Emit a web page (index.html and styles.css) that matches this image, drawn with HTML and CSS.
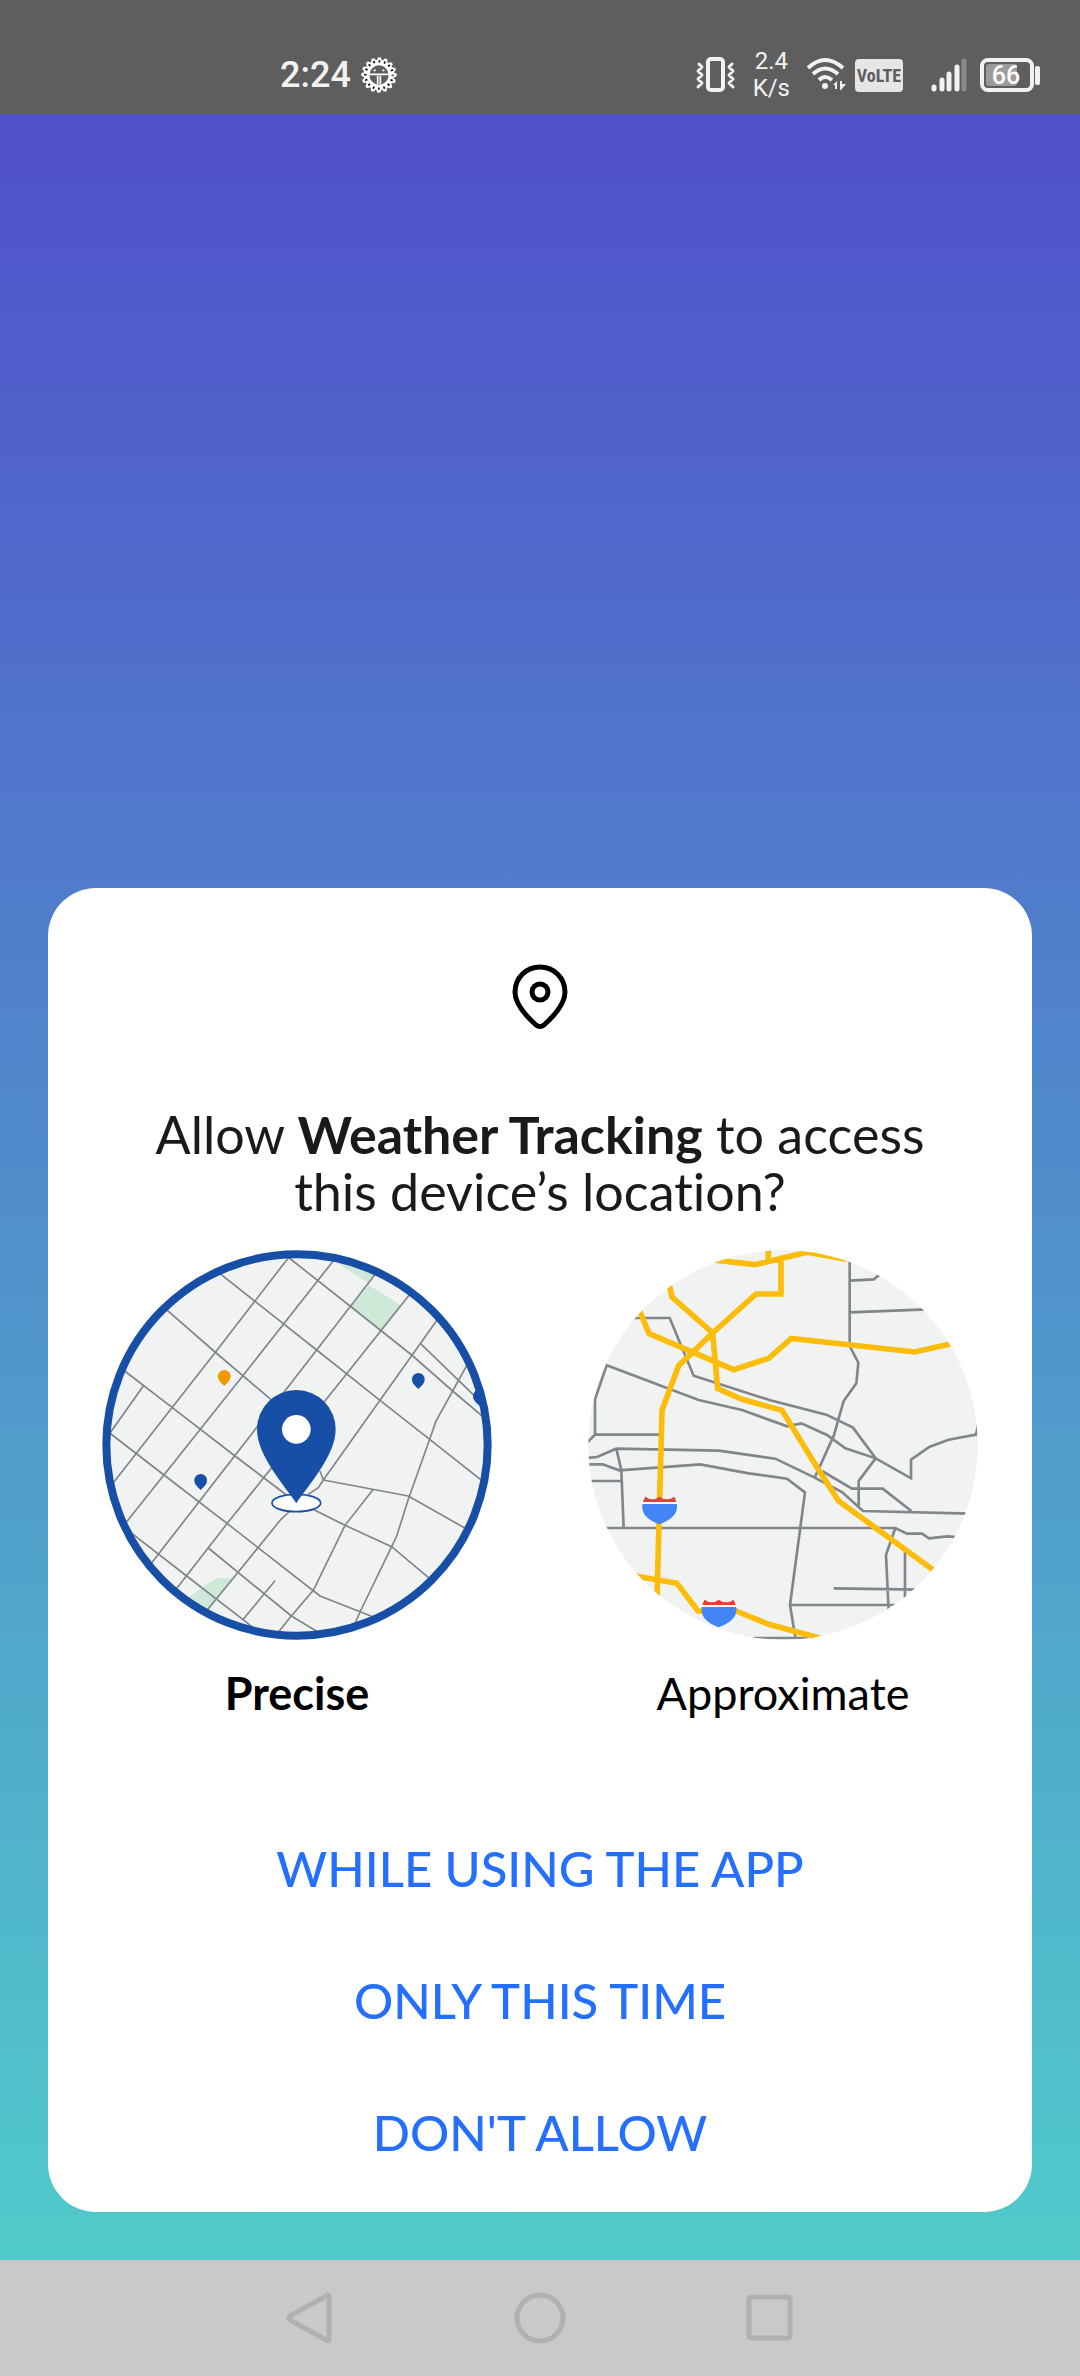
FILE: index.html
```html
<!DOCTYPE html>
<html lang="en">
<head>
<meta charset="utf-8">
<meta name="viewport" content="width=device-width, initial-scale=1">
<title>Location permission</title>
<link rel="stylesheet" href="styles.css">
</head>
<body>
<header class="status">
  <div class="status-group">
    <span class="clock">2:24</span>
    <svg class="gear" viewBox="0 0 108 108" aria-hidden="true">
      <circle cx="54" cy="54" r="46" fill="#fff"/>
      <circle cx="54" cy="54" r="33" fill="#5e5e5e"/>
      <g fill="none">
        <circle cx="54" cy="54" r="47" stroke="#fff" stroke-width="13" stroke-linecap="round" stroke-dasharray="0 18.457"/>
        <circle cx="54" cy="54" r="41" stroke="#000" stroke-width="7" stroke-dasharray="5 11.101" stroke-dashoffset="2.5"/>
        <circle cx="54" cy="54" r="32" stroke="#fff" stroke-width="6"/>
        <path d="M24 52H84M50 56V82M58 56V82" stroke="#fff" stroke-width="5"/>
        <path d="M38 40h6M64 40h6" stroke="#fff" stroke-width="5"/>
      </g>
    </svg>
  </div>
  <div class="status-group">
    <svg class="vibrate" viewBox="0 0 42 36" aria-hidden="true">
      <g fill="none" stroke="#f2f2f2" stroke-width="3" stroke-linejoin="round" stroke-linecap="round">
        <rect x="13" y="2" width="15" height="31" rx="3" stroke-width="4"/>
        <path d="M4 7l3 3-4 4 4 4-4 4 4 4-4 4M37 7l-3 3 4 4-4 4 4 4-4 4 4 4"/>
      </g>
    </svg>
    <span class="speed">2.4<br>K/s</span>
    <svg class="wifi" viewBox="0 0 41 36" aria-hidden="true">
      <g fill="none" stroke="#f2f2f2" stroke-width="4">
        <path d="M2 11Q19 -5 37 11M7 17Q19 6 32 17M13 23Q19 17 26 23"/>
      </g>
      <circle cx="19" cy="29" r="3" fill="#f2f2f2"/>
      <path d="M31 24v8h-2v-4h-2zM34 24h2v3h4l-5 6h-1z" fill="#f2f2f2"/>
    </svg>
    <span class="volte">VoLTE</span>
    <svg class="signal" viewBox="0 0 36 34" aria-hidden="true">
      <g stroke="#f2f2f2" stroke-width="5" stroke-linecap="round">
        <path d="M3 29v2M11 22v9M18 16v15M26 9v22"/>
        <path d="M33 3v28" stroke="#8a8a8a"/>
      </g>
    </svg>
    <svg class="battery" viewBox="0 0 60 34" role="img" aria-label="Battery 66">
      <rect x="2" y="2" width="50" height="30" rx="6" fill="none" stroke="#f2f2f2" stroke-width="4"/>
      <rect x="6" y="6" width="31" height="22" rx="3" fill="#9b9b9b"/>
      <rect x="55" y="8" width="5" height="19" rx="2" fill="#f2f2f2"/>
      <text class="battery-level" x="26" y="26" text-anchor="middle">66</text>
    </svg>
  </div>
</header>

<main class="screen">
  <form class="card">
    <svg class="pin" viewBox="0 0 56 66" aria-hidden="true">
      <g fill="none" stroke="#000" stroke-width="5">
        <path d="M28 3C14 3 3 14 3 28C3 40 14 52 24 61Q28 64 32 61C42 52 53 40 53 28C53 14 42 3 28 3Z"/>
        <circle cx="28" cy="28" r="8"/>
      </g>
    </svg>
    <h1 class="title">Allow <strong>Weather Tracking</strong> to access this device’s location?</h1>

    <div class="options">
      <label class="option">
        <input class="option-input" type="radio" name="accuracy" value="precise" checked>
        <svg class="map" viewBox="36 42 1170 1170" aria-hidden="true">
          <clipPath id="precise-clip"><circle cx="621" cy="627" r="570"/></clipPath>
          <g clip-path="url(#precise-clip)">
            <rect x="36" y="42" width="1170" height="1170" fill="#f0f3f2"/>
            <path d="M745 82L835 142L858 112L780 70ZM837 148L932 208L874 282L783 211ZM290 1090L335 1055L380 1027H430L354 1125L300 1150Z" fill="#cee9d8"/>
            <g fill="none" stroke="#80858a" stroke-width="5">
              <path d="M390 113L680 342L870 493L1019 610L1190 745M590 60L780 210L965 357L1088 465L1200 560M225 217L375 348L560 505M100 402L247 515L435 660L600 785L765 868L905 932L1030 1037M55 588L222 717L412 863L690 1080L860 1147M110 880L290 1020L490 1175M355 936L604 1140L690 1192M991 322L1180 505M700 732L955 780L1140 885"/>
              <path d="M597 63L375 350L50 766M732 72L458 420L80 895M858 112L680 342L170 1000M962 172L770 413L412 862L250 1070M1045 247L870 493L700 732L685 755L655 775M600 825L573 850L443 1010L345 1130M160 450L50 605M690 705L700 732M850 760L765 868L670 1063L604 1140L560 1195M1135 380L1088 465L1038 555L1019 610L955 790L920 900L905 932L810 1128L785 1185M555 1034L458 1152"/>
            </g>
            <ellipse cx="619" cy="801" rx="73" ry="26" fill="#fff" stroke="#174ea6" stroke-width="5"/>
            <path d="M619 802C585 750 501 660 501 580A118 118 0 0 1 737 580C737 660 653 750 619 802Z" fill="#174ea6"/>
            <circle cx="619" cy="580" r="43" fill="#fff"/>
            <path d="M403 450C390 438 384 432 384 421A19 19 0 0 1 422 421C422 432 415 438 403 450Z" fill="#f29900"/>
            <path d="M985 459C972 447 966 441 966 430A19 19 0 0 1 1004 430C1004 441 998 447 985 459ZM332 762C319 750 313 744 313 733A19 19 0 0 1 351 733C351 744 345 750 332 762ZM1170 510C1155 498 1149 490 1149 480A19 19 0 0 1 1190 480Z" fill="#174ea6"/>
          </g>
          <circle cx="621" cy="627" r="572" fill="none" stroke="#174ea6" stroke-width="24"/>
        </svg>
        <span class="option-name">Precise</span>
      </label>
      <label class="option">
        <input class="option-input" type="radio" name="accuracy" value="approximate">
        <svg class="map" viewBox="53 42 1170 1170" aria-hidden="true">
          <clipPath id="approx-clip"><circle cx="638" cy="627" r="584"/></clipPath>
          <g clip-path="url(#approx-clip)">
            <rect x="53" y="42" width="1170" height="1170" fill="#f0f3f2"/>
            <g fill="none" stroke="#80868b" stroke-width="8">
              <path d="M838 70V330L864 380L858 442L820 495L790 600L733 725M838 134L910 130L935 110M838 229L1070 220M180 246H298L370 419L600 493L768 536L848 575L916 667L1022 727V671L1078 632L1135 611L1217 596L1225 560M50 620L74 596V490L109 388L385 492L515 522L650 571L693 562L770 597L825 637L916 667L865 735V815M74 596H272M50 666L80 663L138 638L445 644L615 668L733 725L815 768L878 825L1200 833M50 685H97L147 703L390 685L535 712L650 728L704 769L659 1107L676 1210M138 638L153 703L160 876M60 735H153M100 876H975L1010 893H1055L1076 907L1130 901L1170 904M755 705L845 758H937L1023 825M975 876L947 957L955 1125M1004 945V1090M790 1057L1040 1061M659 1107H1000M550 1206L740 1206"/>
            </g>
            <g fill="none" stroke="#fbbc0b" stroke-width="17">
              <path d="M430 72L554 86L710 49L830 70M594 35V75M632 65V174H557L427 291L325 389L275 523L260 1090M295 140L305 183L427 291L442 458L515 490L635 523L745 702L805 795L1100 1010M208 225L236 293L490 401L595 367L663 307L1033 348L1150 322M195 1020L320 1042L383 1125H400M490 1122L595 1165L750 1207"/>
            </g>
            <g id="shield">
              <path d="M216 804H320C324 837 298 853 267 865C236 853 212 837 216 804Z" fill="#4285f4"/>
              <path d="M218 798Q220 790 225 782Q247 798 267 782Q290 798 312 782Q316 790 318 798Z" fill="#db4437"/>
              <path d="M216 801H320" stroke="#fff" stroke-width="6"/>
            </g>
            <use href="#shield" x="178" y="309"/>
          </g>
        </svg>
        <span class="option-name">Approximate</span>
      </label>
    </div>

    <div class="actions">
      <button class="action" type="button">WHILE USING THE APP</button>
      <button class="action" type="button">ONLY THIS TIME</button>
      <button class="action" type="button">DON'T ALLOW</button>
    </div>
  </form>
</main>

<nav class="navbar">
  <button class="nav-button" type="button" aria-label="Back">
    <svg class="nav-icon" viewBox="0 0 52 52"><path d="M44 3Q45 3 45 5V47Q45 50 42 48L6 28Q3 26 6 24L42 4Z"/></svg>
  </button>
  <button class="nav-button" type="button" aria-label="Home">
    <svg class="nav-icon" viewBox="0 0 52 52"><circle cx="26" cy="26" r="23"/></svg>
  </button>
  <button class="nav-button" type="button" aria-label="Recent apps">
    <svg class="nav-icon" viewBox="0 0 52 52"><rect x="5" y="5" width="41" height="41" rx="2"/></svg>
  </button>
</nav>
</body>
</html>
```
FILE: styles.css
```css
* {
  box-sizing: border-box;
}

body {
  display: flex;
  flex-direction: column;
  min-height: 100vh;
  margin: 0;
  color: #1a1a1a;
  font-family: Lato, "Open Sans", sans-serif;
  font-variant-ligatures: none;
}

button {
  padding: 0;
  border: 0;
  background: none;
  font: inherit;
  cursor: pointer;
}

svg {
  display: block;
}

/* Status bar */
.status {
  display: flex;
  align-items: center;
  justify-content: space-between;
  height: 114px;
  padding: 36px 40px 0 280px;
  background: #5e5e5e;
  color: #f2f2f2;
  font-family: Roboto, sans-serif;
}

.status-group {
  display: flex;
  align-items: center;
}

.clock {
  margin-right: 10px;
  font-size: 36px;
  font-weight: 500;
  line-height: 36px;
}

.gear {
  width: 36px;
  height: 36px;
}

.vibrate {
  width: 42px;
  height: 36px;
}

.speed {
  margin: 0 16px;
  font-size: 24px;
  line-height: 27px;
  text-align: center;
}

.wifi {
  width: 41px;
  height: 36px;
}

.volte {
  width: 48px;
  height: 33px;
  margin: 0 28px 0 8px;
  border-radius: 4px;
  background: #e6e6e6;
  color: #5e5e5e;
  font-family: "Roboto Condensed", "Liberation Sans Narrow", sans-serif;
  font-size: 18px;
  font-weight: 700;
  line-height: 33px;
  text-align: center;
}

.signal {
  width: 36px;
  height: 34px;
  margin-right: 13px;
}

.battery {
  width: 60px;
  height: 34px;
}

.battery-level {
  fill: #ffffff;
  font-size: 25px;
  font-weight: 500;
}

/* Permission card */
.screen {
  display: flex;
  flex: 1;
  flex-direction: column;
  justify-content: flex-end;
  padding: 48px;
  background: linear-gradient(#5050cb, #50cbcb);
}

.card {
  padding: 76px 54px 14px;
  border-radius: 48px;
  background: #ffffff;
}

.pin {
  width: 56px;
  height: 66px;
  margin: 0 auto;
}

.title {
  max-width: 800px;
  margin: 76px auto 30px;
  font-size: 52px;
  font-weight: 400;
  line-height: 57px;
  text-align: center;
}

.options {
  display: flex;
  justify-content: space-between;
}

.option {
  position: relative;
  cursor: pointer;
}

.option-input {
  position: absolute;
  opacity: 0;
}

.map {
  width: 390px;
  height: 390px;
}

.option-name {
  display: block;
  margin-top: 28px;
  color: #000000;
  font-size: 45px;
  line-height: 50px;
  text-align: center;
}

.option-input:checked ~ .option-name {
  font-weight: 700;
}

.actions {
  display: flex;
  flex-direction: column;
  margin-top: 84px;
}

.action {
  height: 132px;
  color: #256fff;
  font-size: 49px;
  font-weight: 500;
}

/* Navigation bar */
.navbar {
  display: grid;
  grid-template-columns: repeat(3, 1fr);
  height: 116px;
  padding: 0 18%;
  background: #c9c9c9;
}

.nav-button {
  display: grid;
  place-items: center;
}

.nav-icon {
  width: 52px;
  height: 52px;
  fill: none;
  stroke: #b1b1b1;
  stroke-width: 5;
}
```
